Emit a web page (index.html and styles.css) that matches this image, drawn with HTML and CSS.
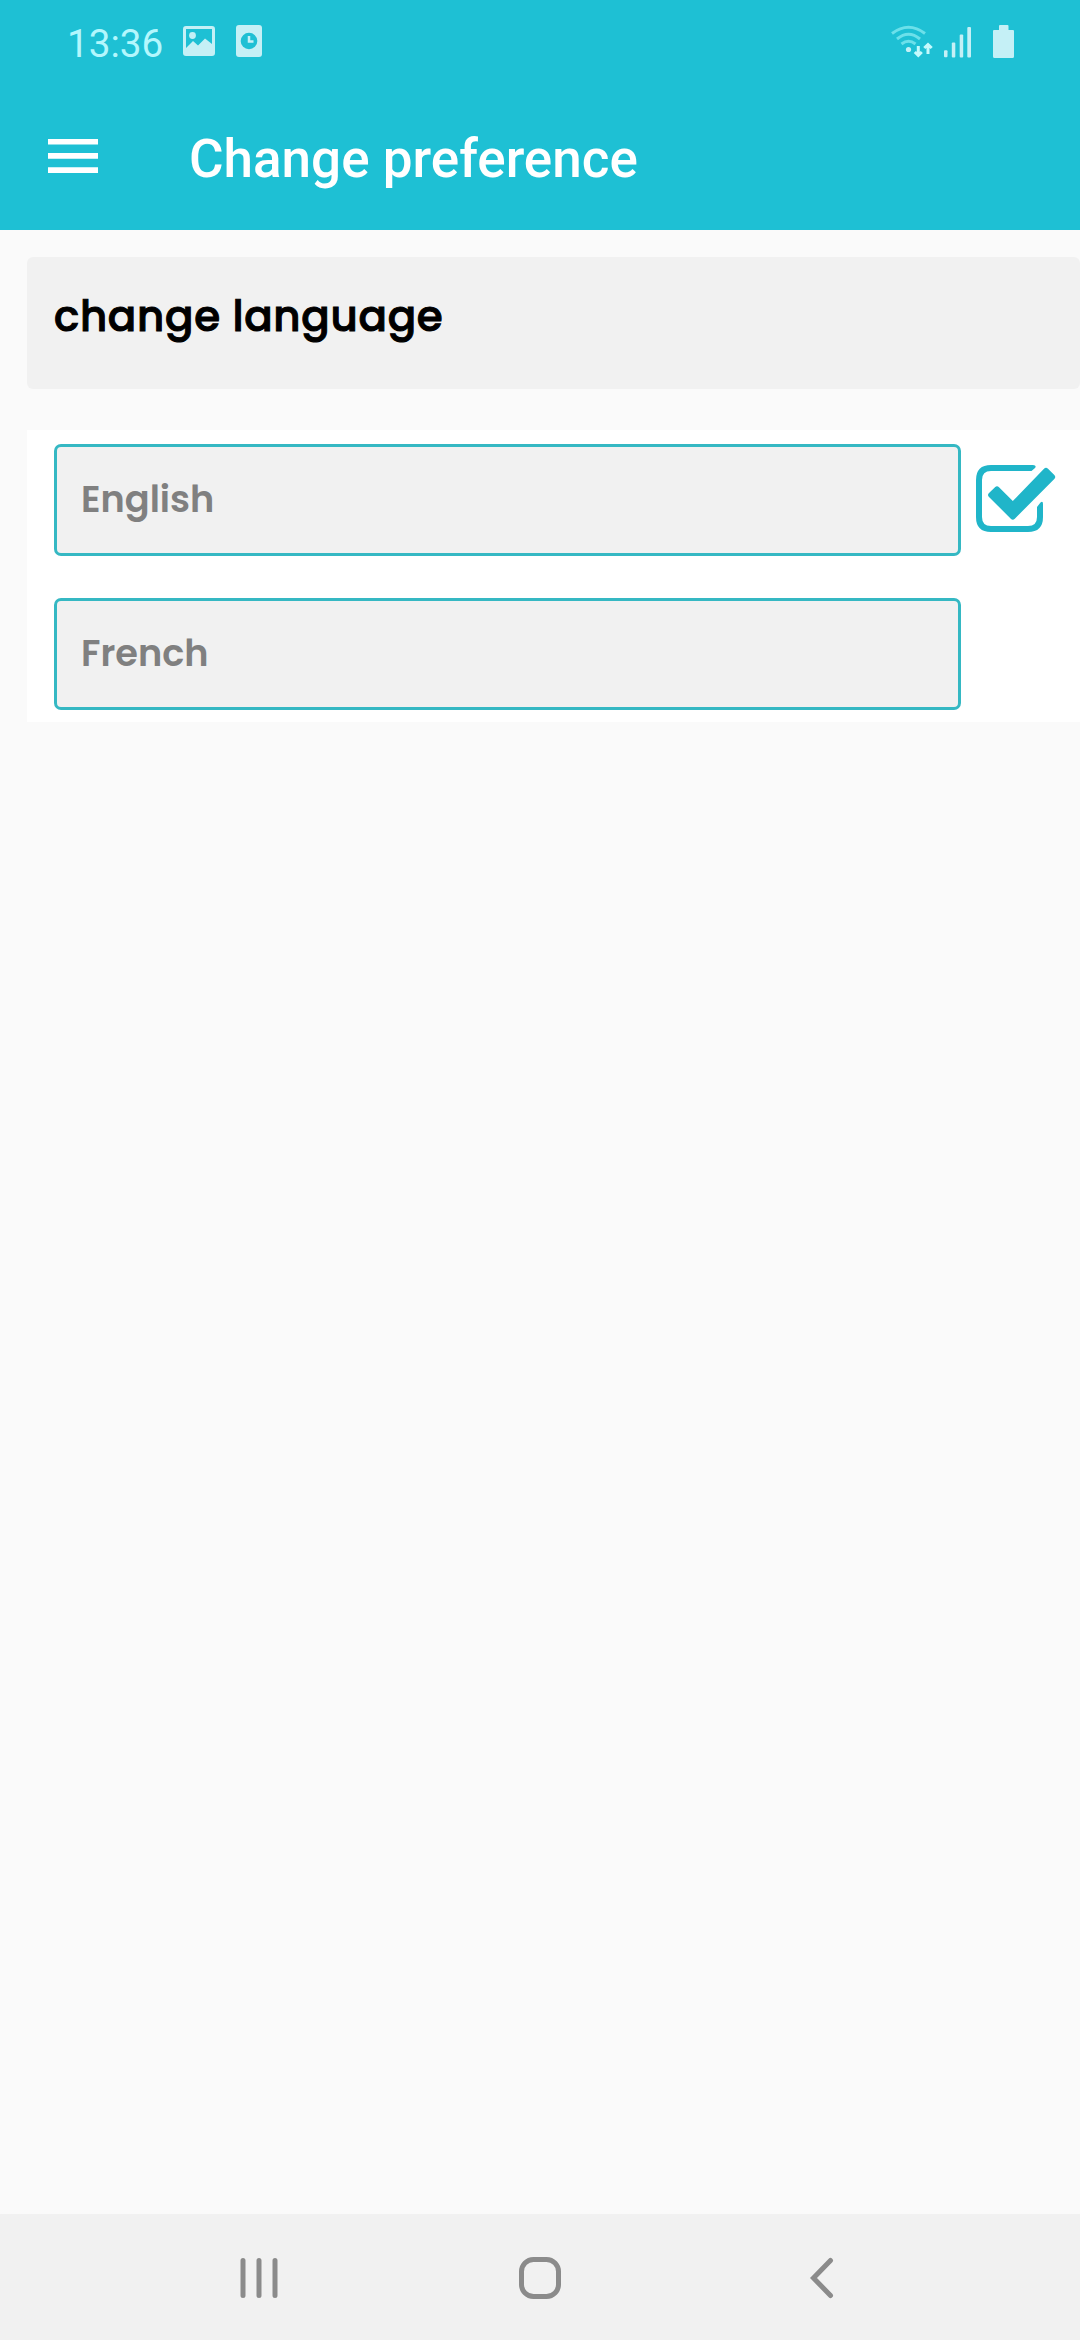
FILE: index.html
```html
<!DOCTYPE html>
<html lang="en">
<head>
<meta charset="utf-8">
<title>Change preference</title>
<link rel="stylesheet" href="styles.css">
</head>
<body>
<div class="screen">
  <div class="status">
    <span class="clock">13:36</span>
    <svg class="gallery" width="32" height="30" viewBox="0 0 32 30"><path fill-rule="evenodd" d="M3 0H29Q32 0 32 3V27Q32 30 29 30H3Q0 30 0 27V3Q0 0 3 0ZM3 3V22L10 15L15 19.5L22 12.5L29 18V3Z"/><circle cx="9.5" cy="9.5" r="3.4"/></svg>
    <svg class="alarm" width="26" height="32" viewBox="0 0 26 32"><rect width="26" height="32" rx="3"/><circle class="face" cx="13" cy="16" r="8.3"/><path class="hands" d="M13 11V16.5H17.5"/></svg>
    <svg class="system" width="130" height="36" viewBox="888 24 130 36">
      <g class="waves"><path d="M892 33.5Q908.500 21 925 33.500M897 39Q908.500 29.500 920 39M901.500 44Q908.500 38.500 915.500 44"/></g>
      <circle cx="908.500" cy="49.500" r="2.600"/>
      <path class="arrows" d="M918.300 46V55M914.800 52L918.300 55.500L921.800 52M928 54V45M924.300 48L928 44.500L931.700 48"/>
      <rect x="944" y="50.300" width="3.500" height="7" rx="1"/><rect x="951.800" y="42.500" width="3.500" height="15" rx="1"/><rect x="959.700" y="34.500" width="3.500" height="23" rx="1"/><rect x="967.300" y="27" width="3.700" height="30.500" rx="1"/>
      <path d="M999 30V26Q999 25 1000 25H1007.500Q1008.500 25 1008.500 26V30H1013Q1014 30 1014 31V56.500Q1014 58 1012.500 58H994.500Q993 58 993 56.500V31Q993 30 994 30Z"/>
    </svg>
  </div>
  <header class="toolbar">
    <svg class="menu" width="50" height="34" viewBox="0 0 50 34"><path d="M0 0H50V5.500H0ZM0 14H50V19.700H0ZM0 28.300H50V34H0Z"/></svg>
    <h1 class="title">Change preference</h1>
  </header>
  <main class="content">
    <h2 class="section">change language</h2>
    <div class="options">
      <div class="row">
        <div class="option">English</div>
        <svg class="check" width="80" height="68" viewBox="976 465 80 68"><path d="M1033 465Q1037 465.500 1035 468L1031.500 471H991Q982 471 982 480V517Q982 526 991 526H1028Q1037 526 1037 517V507L1040.500 502.500Q1043 500.500 1043 504V517Q1043 532 1028 532H991Q976 532 976 517V480Q976 465 991 465Z"/><path d="M1044 468.800Q1046 466.800 1048 468.800L1054.300 475.100Q1056.200 477 1054.300 479L1014.800 518.700Q1012.800 520.700 1010.800 518.700L989 497Q987 495 989 493L995 487.200Q997 485.200 999 487.200L1012.800 501Z"/></svg>
      </div>
      <div class="row">
        <div class="option">French</div>
      </div>
    </div>
  </main>
  <nav class="nav">
    <svg width="44" height="44" viewBox="0 0 44 44"><path d="M6 4.500V39.500M22 4.500V39.500M38 4.500V39.500"/></svg>
    <svg width="44" height="44" viewBox="0 0 44 44"><rect x="3.500" y="3.500" width="37" height="37" rx="12"/></svg>
    <svg width="44" height="44" viewBox="0 0 44 44"><path d="M31.500 4.500L14.500 22L31.500 39.500"/></svg>
  </nav>
</div>
</body>
</html>
```
FILE: styles.css
```css
* { box-sizing: border-box; }
body { margin: 0; background: #fafafa; }
svg { display: block; flex: none; }
h1, h2 { margin: 0; }

.screen {
  display: flex;
  flex-direction: column;
  width: 1080px;
  height: 2340px;
  overflow: hidden;
  font-family: Roboto, sans-serif;
}

.status {
  display: flex;
  align-items: flex-start;
  height: 84px;
  padding: 0 62px 0 67px;
  background: #1ec0d4;
  fill: #c5f0f6;
}
.clock {
  width: 116px;
  padding-top: 20px;
  font-size: 38.7px;
  line-height: 48px;
  color: #b3f7fd;
}
.gallery { margin-top: 26px; }
.alarm { margin: 25px 0 0 21px; }
.face { fill: #1ec0d4; }
.hands { fill: none; stroke: #c5f0f6; stroke-width: 2.5; }
.system { margin: 24px 0 0 auto; }
.waves { fill: none; stroke: #6ce0ea; stroke-width: 3; }
.arrows { fill: none; stroke: #c5fafd; stroke-width: 3; }

.toolbar {
  display: flex;
  align-items: flex-start;
  height: 146px;
  padding: 0 48px;
  background: #1ec0d4;
}
.menu { margin-top: 55px; fill: #fff; }
.title {
  margin-left: 91px;
  padding-top: 43px;
  font-size: 53px;
  font-weight: 500;
  line-height: 64px;
  color: #fff;
}

.content {
  flex: 1;
  padding: 27px 0 0 27px;
  font-family: Poppins, Inter, sans-serif;
}
.section {
  height: 132px;
  padding: 34px 0 0 27px;
  border-radius: 6px;
  background: #f1f1f1;
  font-size: 42px;
  font-weight: 500;
  line-height: 52px;
  letter-spacing: 0.7px;
  color: #000;
  -webkit-text-stroke: 1px #000;
}
.options {
  display: flex;
  flex-direction: column;
  gap: 42px;
  height: 292px;
  margin-top: 41px;
  padding: 14px 0 12px 27px;
  background: #fff;
}
.row { display: flex; }
.option {
  width: 907px;
  height: 112px;
  padding: 29px 24px 0;
  border: 3px solid #35b8c3;
  border-radius: 7px;
  background: #f1f1f1;
  font-size: 36.7px;
  font-weight: 600;
  line-height: 46px;
  color: #808080;
}
.check { margin: 21px 0 0 15px; fill: #20b5c9; }

.nav {
  display: flex;
  align-items: center;
  justify-content: center;
  gap: 237px;
  height: 126px;
  padding-top: 2px;
  background: #f1f1f1;
  fill: none;
  stroke: #8b8b8b;
  stroke-width: 5;
  stroke-linecap: round;
}
```
